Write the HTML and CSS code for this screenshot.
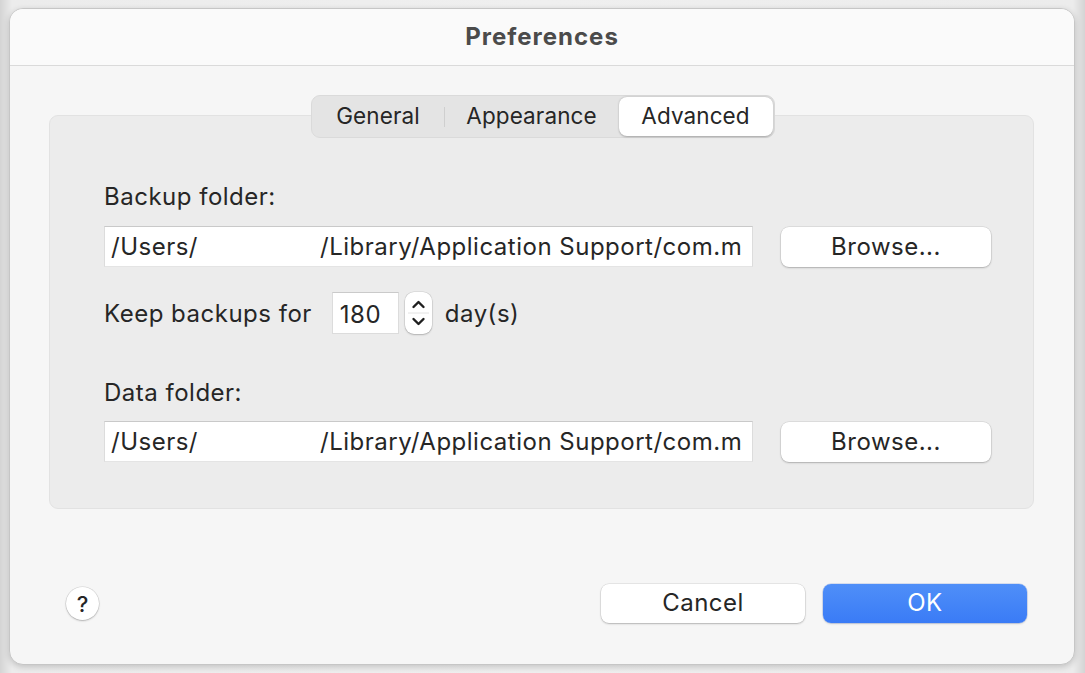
FILE: index.html
```html
<!DOCTYPE html>
<html>
<head>
<meta charset="utf-8">
<link rel="stylesheet" href="styles.css">
</head>
<body>
<div class="window">
  <div class="titlebar">Preferences</div>
  <div class="content">
    <div class="tabs">
      <div class="seg">
        <span class="tab">General</span>
        <span class="sep"></span>
        <span class="tab">Appearance</span>
        <span class="tab active">Advanced</span>
      </div>
    </div>
    <div class="group">
      <div class="label">Backup folder:</div>
      <div class="path-row">
        <div class="field"><span class="seg1">/Users/</span><span>/Library/Application Support/com.m</span></div>
        <button class="btn browse">Browse...</button>
      </div>
      <div class="keep-row">
        <span>Keep backups for</span>
        <div class="num">180</div>
        <div class="stepper">
          <svg width="27" height="42" viewBox="0 0 27 42">
            <path d="M8.5 15 L13.5 10 L18.5 15" fill="none" stroke="#1f1f1f" stroke-width="2.4" stroke-linecap="round" stroke-linejoin="round"/>
            <line x1="3" y1="21" x2="24" y2="21" stroke="#e2e2e2" stroke-width="1"/>
            <path d="M8.5 27 L13.5 32 L18.5 27" fill="none" stroke="#1f1f1f" stroke-width="2.4" stroke-linecap="round" stroke-linejoin="round"/>
          </svg>
        </div>
        <span class="days">day(s)</span>
      </div>
      <div class="label data-label">Data folder:</div>
      <div class="path-row">
        <div class="field"><span class="seg1">/Users/</span><span>/Library/Application Support/com.m</span></div>
        <button class="btn browse">Browse...</button>
      </div>
    </div>
    <div class="footer">
      <button class="help">?</button>
      <div class="actions">
        <button class="btn action">Cancel</button>
        <button class="btn action primary">OK</button>
      </div>
    </div>
  </div>
</div>
</body>
</html>
```

FILE: styles.css
```css
* { box-sizing: border-box; }
html, body { margin: 0; height: 100%; }
body {
  background: linear-gradient(90deg, #d4d4d4 0px, #ececec 12px, #efefef 50%, #ececec calc(100% - 12px), #d4d4d4 100%);
  padding: 8px 10px 8px 9px;
  font-family: Inter, "Noto Sans", "Liberation Sans", sans-serif;
  color: #262626;
  letter-spacing: 0.5px;
}
.window {
  width: 1066px;
  height: 657px;
  background: #f6f6f6;
  border: 1px solid #c6c6c6;
  border-radius: 14px;
  box-shadow: 0 2px 6px rgba(0,0,0,0.18);
  overflow: hidden;
  display: flex;
  flex-direction: column;
}
.titlebar {
  height: 57px;
  flex: none;
  background: #fafafa;
  border-bottom: 1px solid #dadada;
  display: flex;
  align-items: center;
  justify-content: center;
  font-weight: 700;
  font-size: 24px;
  letter-spacing: 1px;
  color: #4b4b4b;
  padding-bottom: 1px;
}
.content {
  flex: 1;
  display: flex;
  flex-direction: column;
  padding: 29px 40px 0 39px;
}
.tabs {
  display: flex;
  justify-content: center;
  position: relative;
  z-index: 1;
  margin-bottom: -23px;
  padding-left: 2px;
}
.seg {
  display: flex;
  align-items: center;
  height: 43px;
  background: #e4e4e4;
  border: 1px solid #dadada;
  border-radius: 9px;
  padding: 1px;
}
.tab {
  height: 39px;
  display: flex;
  align-items: center;
  justify-content: center;
  font-size: 22.5px;
  letter-spacing: 0.1px;
  color: #262626;
  padding: 0 0 2px 0;
  border-radius: 8px;
}
.tab:first-child { width: 131px; }
.tab:nth-child(3) { width: 174px; }
.sep {
  width: 1px;
  height: 20px;
  background: #cfcfcf;
}
.tab.active {
  width: 154px;
  background: #ffffff;
  box-shadow: 0 0.5px 2px rgba(0,0,0,0.28);
}
.group {
  background: #ececec;
  border: 1px solid #e2e2e2;
  border-radius: 9px;
  height: 394px;
  padding: 67px 42px 0 54px;
  display: flex;
  flex-direction: column;
}
.label {
  font-size: 24px;
  line-height: 28px;
  height: 28px;
}
.path-row {
  display: flex;
  align-items: center;
  margin-top: 14px;
  gap: 28px;
}
.field {
  width: 649px;
  height: 41px;
  background: #ffffff;
  border: 1px solid #dcdcdc;
  border-top-color: #c9c9c9;
  border-bottom-color: #e4e4e4;
  font-size: 24px;
  display: flex;
  align-items: center;
  padding-left: 6px;
  white-space: nowrap;
  overflow: hidden;
}
.seg1 { width: 209px; flex: none; }
.btn {
  font-family: inherit;
  letter-spacing: 0.5px;
  border: none;
  background: #ffffff;
  border-radius: 8px;
  box-shadow: 0 0 0 0.5px rgba(0,0,0,0.12), 0 1px 2px rgba(0,0,0,0.22);
  color: #262626;
  font-size: 24px;
  padding: 0 0 2px 0;
}
.browse {
  width: 210px;
  height: 40px;
  margin-top: 2px;
}
.keep-row {
  display: flex;
  align-items: center;
  margin-top: 25px;
  font-size: 24px;
  height: 42px;
}
.num {
  margin-left: 20px;
  width: 67px;
  height: 42px;
  background: #ffffff;
  border: 1px solid #dcdcdc;
  border-top-color: #cacaca;
  display: flex;
  align-items: center;
  padding-left: 7px;
  padding-top: 3px;
  font-size: 24px;
}
.stepper {
  margin-left: 6px;
  width: 27px;
  height: 42px;
  background: #ffffff;
  border-radius: 9px;
  box-shadow: 0 0 0 0.5px rgba(0,0,0,0.12), 0 1px 2px rgba(0,0,0,0.2);
  display: flex;
}
.days { margin-left: 13px; }
.data-label { margin-top: 45px; }
.data-label + .path-row { margin-top: 13px; }
.footer {
  display: flex;
  align-items: center;
  justify-content: space-between;
  margin-top: 75px;
  padding-left: 17px;
  padding-right: 7px;
}
.help {
  width: 33px;
  height: 33px;
  border-radius: 50%;
  border: none;
  background: #ffffff;
  box-shadow: 0 0 0 0.5px rgba(0,0,0,0.14), 0 1px 2px rgba(0,0,0,0.22);
  font-family: inherit;
  font-size: 22px;
  font-weight: 500;
  color: #262626;
  padding: 0;
}
.actions {
  display: flex;
  gap: 18px;
}
.action {
  width: 204px;
  height: 39px;
}
.primary {
  background: linear-gradient(180deg, #4f8ff8 0%, #3a7bf6 100%);
  color: #ffffff;
  box-shadow: 0 0 0 0.5px rgba(40,90,200,0.3), 0 1px 2px rgba(0,0,0,0.15);
}
```
